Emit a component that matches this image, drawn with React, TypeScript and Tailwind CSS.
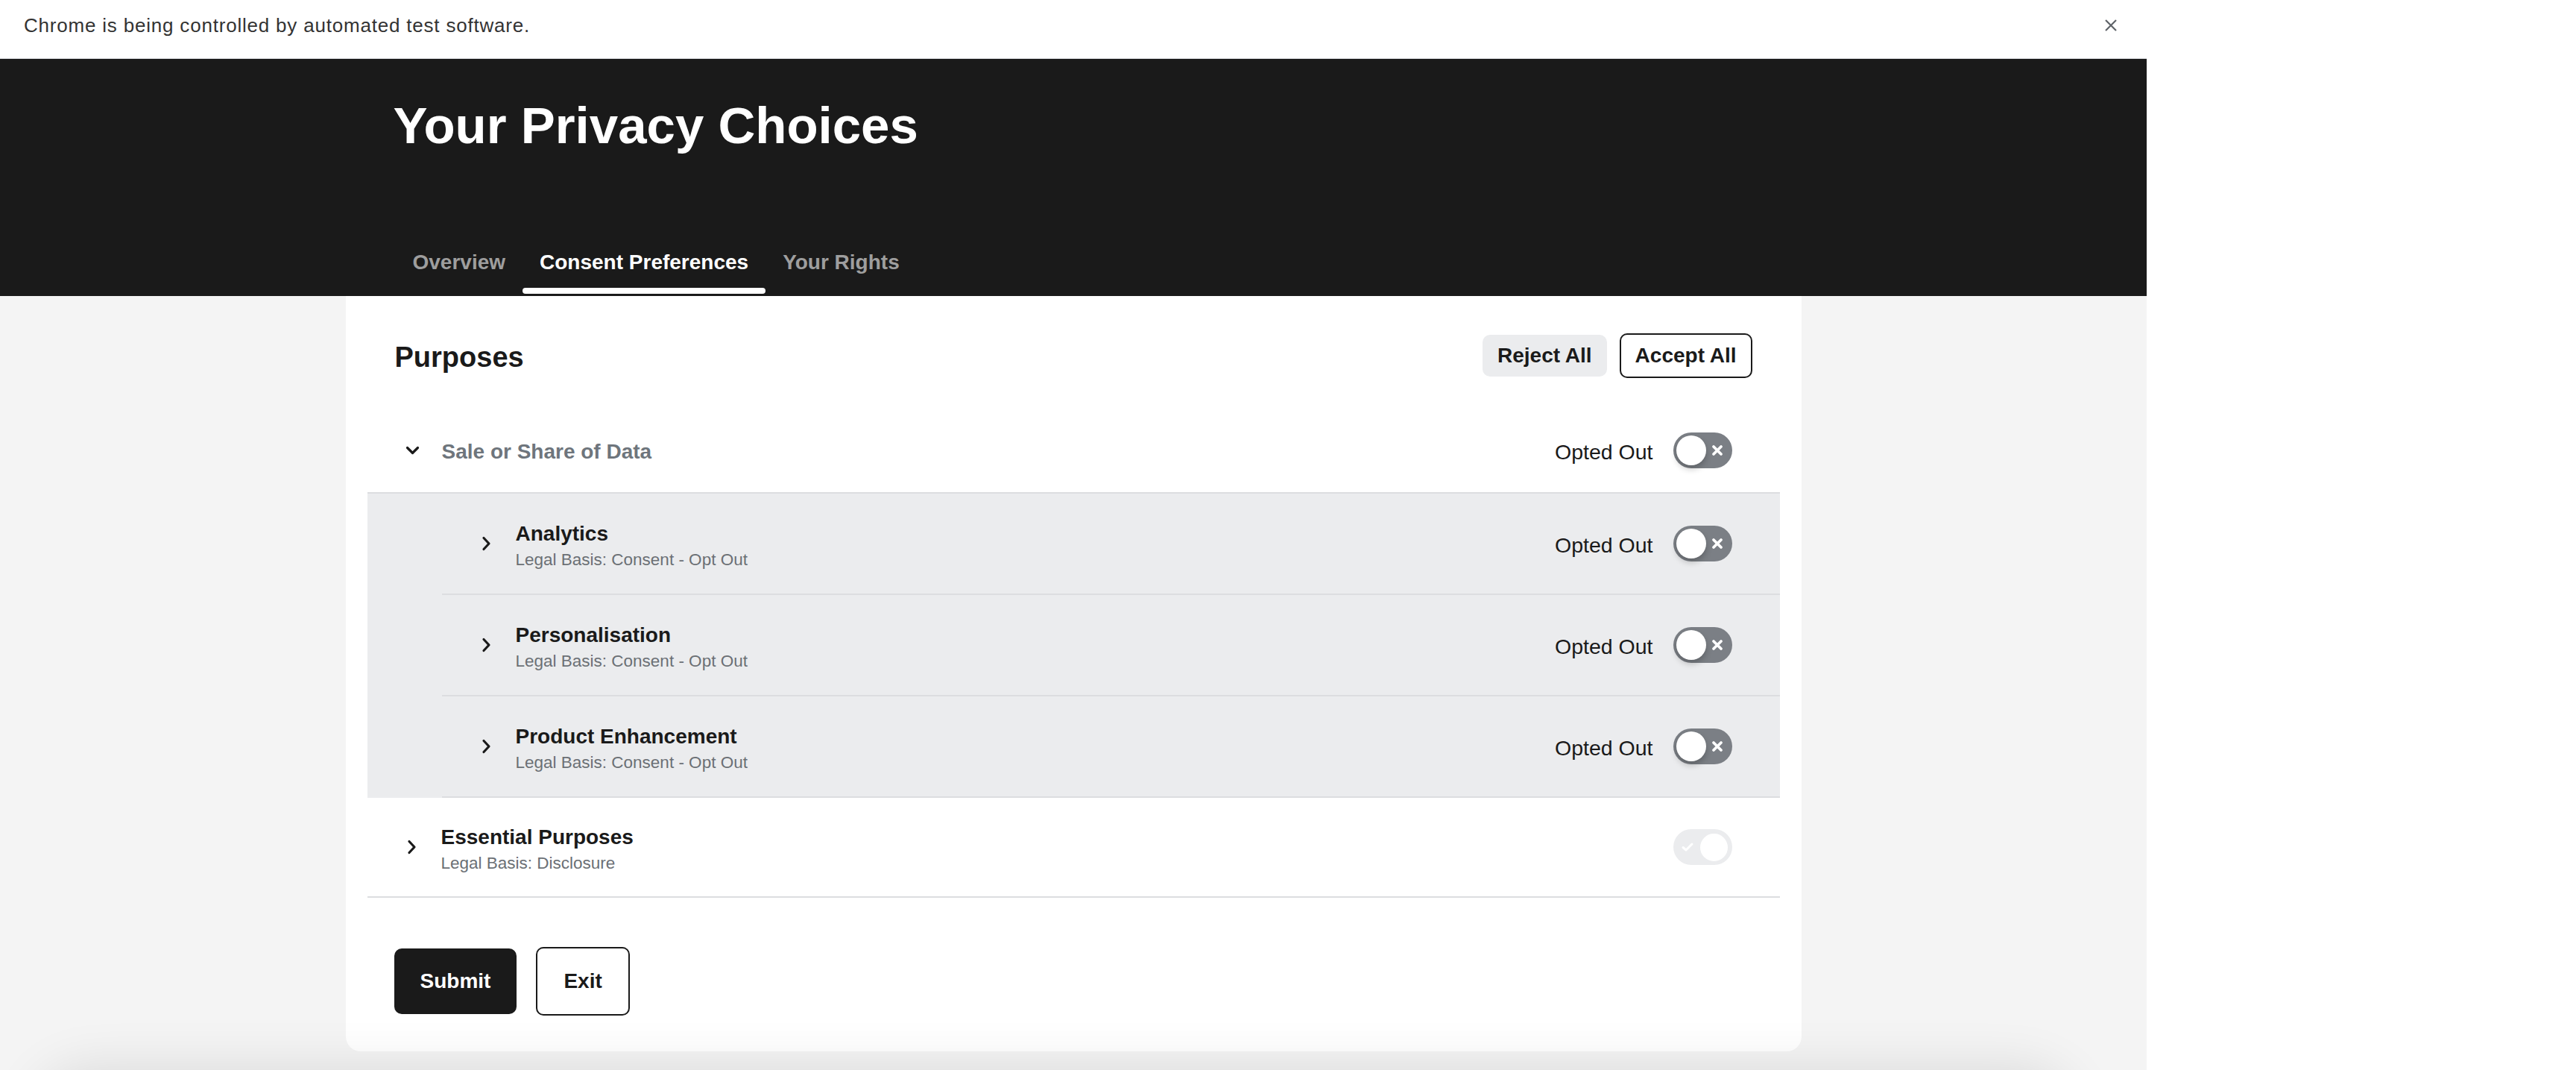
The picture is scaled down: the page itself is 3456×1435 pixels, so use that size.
import React from "react";

const font = { fontFamily: '"Liberation Sans", Arial, sans-serif' };

function ChevronRight() {
  return (
    <svg width="13" height="20" viewBox="0 0 13 20" fill="none" className="shrink-0">
      <path d="M3 2.5 L10 10 L3 17.5" stroke="#1a1a1a" strokeWidth="3.2" strokeLinecap="round" strokeLinejoin="round" />
    </svg>
  );
}

function ChevronDown() {
  return (
    <svg width="19" height="12" viewBox="0 0 19 12" fill="none" className="shrink-0">
      <path d="M2.5 2.5 L9.5 9.5 L16.5 2.5" stroke="#1a1a1a" strokeWidth="3.2" strokeLinecap="round" strokeLinejoin="round" />
    </svg>
  );
}

function ToggleOff() {
  return (
    <div className="w-[79px] h-[48px] rounded-full bg-[#7b7f85] flex items-center p-[4px] shrink-0">
      <div className="w-[40px] h-[40px] rounded-full bg-white shadow-[0_5px_9px_rgba(0,0,0,0.22)]" />
      <div className="flex-1 flex items-center justify-center">
        <svg width="16" height="16" viewBox="0 0 16 16" fill="none">
          <path d="M3 3 L13 13 M13 3 L3 13" stroke="#fff" strokeWidth="3.8" strokeLinecap="round" />
        </svg>
      </div>
    </div>
  );
}

function ToggleLockedOn() {
  return (
    <div className="w-[79px] h-[48px] rounded-full bg-[#ebecee] flex items-center p-[4px] shrink-0">
      <div className="flex-1 flex items-center justify-center">
        <svg width="18" height="14" viewBox="0 0 18 14" fill="none">
          <path d="M3 7.5 L7 11 L15 3" stroke="#fff" strokeWidth="3" strokeLinecap="round" strokeLinejoin="round" />
        </svg>
      </div>
      <div className="w-[41px] h-[41px] rounded-full bg-white border-2 border-[#ebecee]" />
    </div>
  );
}

function OptedOut() {
  return (
    <div className="ml-auto flex items-center">
      <span className="pt-[3px] text-[28.5px] leading-[32px] text-[#1a1a1a]">Opted Out</span>
      <div className="ml-[27px]">
        <ToggleOff />
      </div>
    </div>
  );
}

const subPurposes = ["Analytics", "Personalisation", "Product Enhancement"];

export default function App() {
  return (
    <div className="w-full h-[1435px] overflow-hidden bg-white" style={font}>
      <div className="relative w-[2880px] h-full bg-[#f4f4f4]">
        {/* Browser infobar */}
        <div className="h-[79px] bg-white border-b border-[#dadce0] flex items-start justify-between pl-[32px] pr-[39px]">
          <span className="pt-[19px] text-[26px] leading-[30px] tracking-[0.8px] text-[#333]">
            Chrome is being controlled by automated test software.
          </span>
          <svg width="18" height="18" viewBox="0 0 18 18" fill="none" className="mt-[25px]">
            <path d="M2 2 L16 16 M16 2 L2 16" stroke="#5f6368" strokeWidth="2.2" />
          </svg>
        </div>

        {/* Header */}
        <div className="h-[318px] bg-[#1a1a1a]">
          <div className="w-[1953px] mx-auto px-[64px] pt-[56px] flex flex-col">
            <h1 className="text-[69px] leading-[68px] font-bold text-white">Your Privacy Choices</h1>
            <nav className="mt-[135px] ml-[3px] flex">
              {["Overview", "Consent Preferences", "Your Rights"].map((t) => {
                const active = t === "Consent Preferences";
                return (
                  <div key={t} className="px-[23px] flex flex-col">
                    <span className={`text-[28px] leading-[28px] font-bold ${active ? "text-white" : "text-[#9e9e9e]"}`}>{t}</span>
                    <div className={`mt-[20px] h-[8px] -mx-[23px] rounded-full ${active ? "bg-white" : "bg-transparent"}`} />
                  </div>
                );
              })}
            </nav>
          </div>
        </div>

        {/* Card */}
        <div className="w-[1953px] mx-auto bg-white rounded-b-[20px] px-[29px] pt-[50px] pb-[48px] text-[#1a1a1a]">
          <div className="h-[60px] flex items-center justify-between px-[37px]">
            <h2 className="pt-[3px] text-[38px] leading-[44px] font-bold">Purposes</h2>
            <div className="flex items-center gap-[17px]">
              <button className="h-[56px] px-[20px] rounded-[10px] bg-[#ebecee] text-[28px] font-bold">Reject All</button>
              <button className="h-[60px] px-[19px] rounded-[10px] border-2 border-[#1a1a1a] text-[28px] font-bold">Accept All</button>
            </div>
          </div>

          {/* Sale or Share */}
          <div className="mt-[41px] h-[114px] border-b-2 border-[#dcdde0] flex items-center pl-[51px] pr-[64px]">
            <ChevronDown />
            <span className="ml-[30px] pt-[3px] text-[28px] leading-[32px] font-bold text-[#6e757c]">Sale or Share of Data</span>
            <OptedOut />
          </div>

          <div className="bg-[#ebecee] pl-[100px]">
            {subPurposes.map((p) => (
              <div key={p} className="h-[136px] border-b-2 border-[#dcdde0] flex items-center pl-[53px] pr-[64px]">
                <ChevronRight />
                <div className="ml-[33px] pt-[3px] flex flex-col">
                  <span className="text-[28px] leading-[40px] font-bold">{p}</span>
                  <span className="text-[22.5px] leading-[30px] text-[#6b7075]">Legal Basis: Consent - Opt Out</span>
                </div>
                <OptedOut />
              </div>
            ))}
          </div>

          {/* Essential */}
          <div className="h-[134px] border-b-2 border-[#dcdde0] flex items-center pl-[53px] pr-[64px]">
            <ChevronRight />
            <div className="ml-[33px] pt-[3px] flex flex-col">
              <span className="text-[28px] leading-[40px] font-bold">Essential Purposes</span>
              <span className="text-[22.5px] leading-[30px] text-[#6b7075]">Legal Basis: Disclosure</span>
            </div>
            <div className="ml-auto">
              <ToggleLockedOn />
            </div>
          </div>

          <div className="mt-[66px] pl-[36px] flex items-center gap-[26px]">
            <button className="h-[88px] px-[35px] rounded-[10px] bg-[#1a1a1a] text-white text-[28px] font-bold">Submit</button>
            <button className="h-[92px] px-[35px] rounded-[10px] border-2 border-[#1a1a1a] text-[28px] font-bold">Exit</button>
          </div>
        </div>

        {/* footer shadow coming from below the fold */}
        <div className="absolute left-[60px] right-[110px] top-[1447px] h-[120px] rounded-full bg-[#e4e4e4] shadow-[0_0_70px_14px_rgba(0,0,0,0.11)]" />
      </div>
    </div>
  );
}
